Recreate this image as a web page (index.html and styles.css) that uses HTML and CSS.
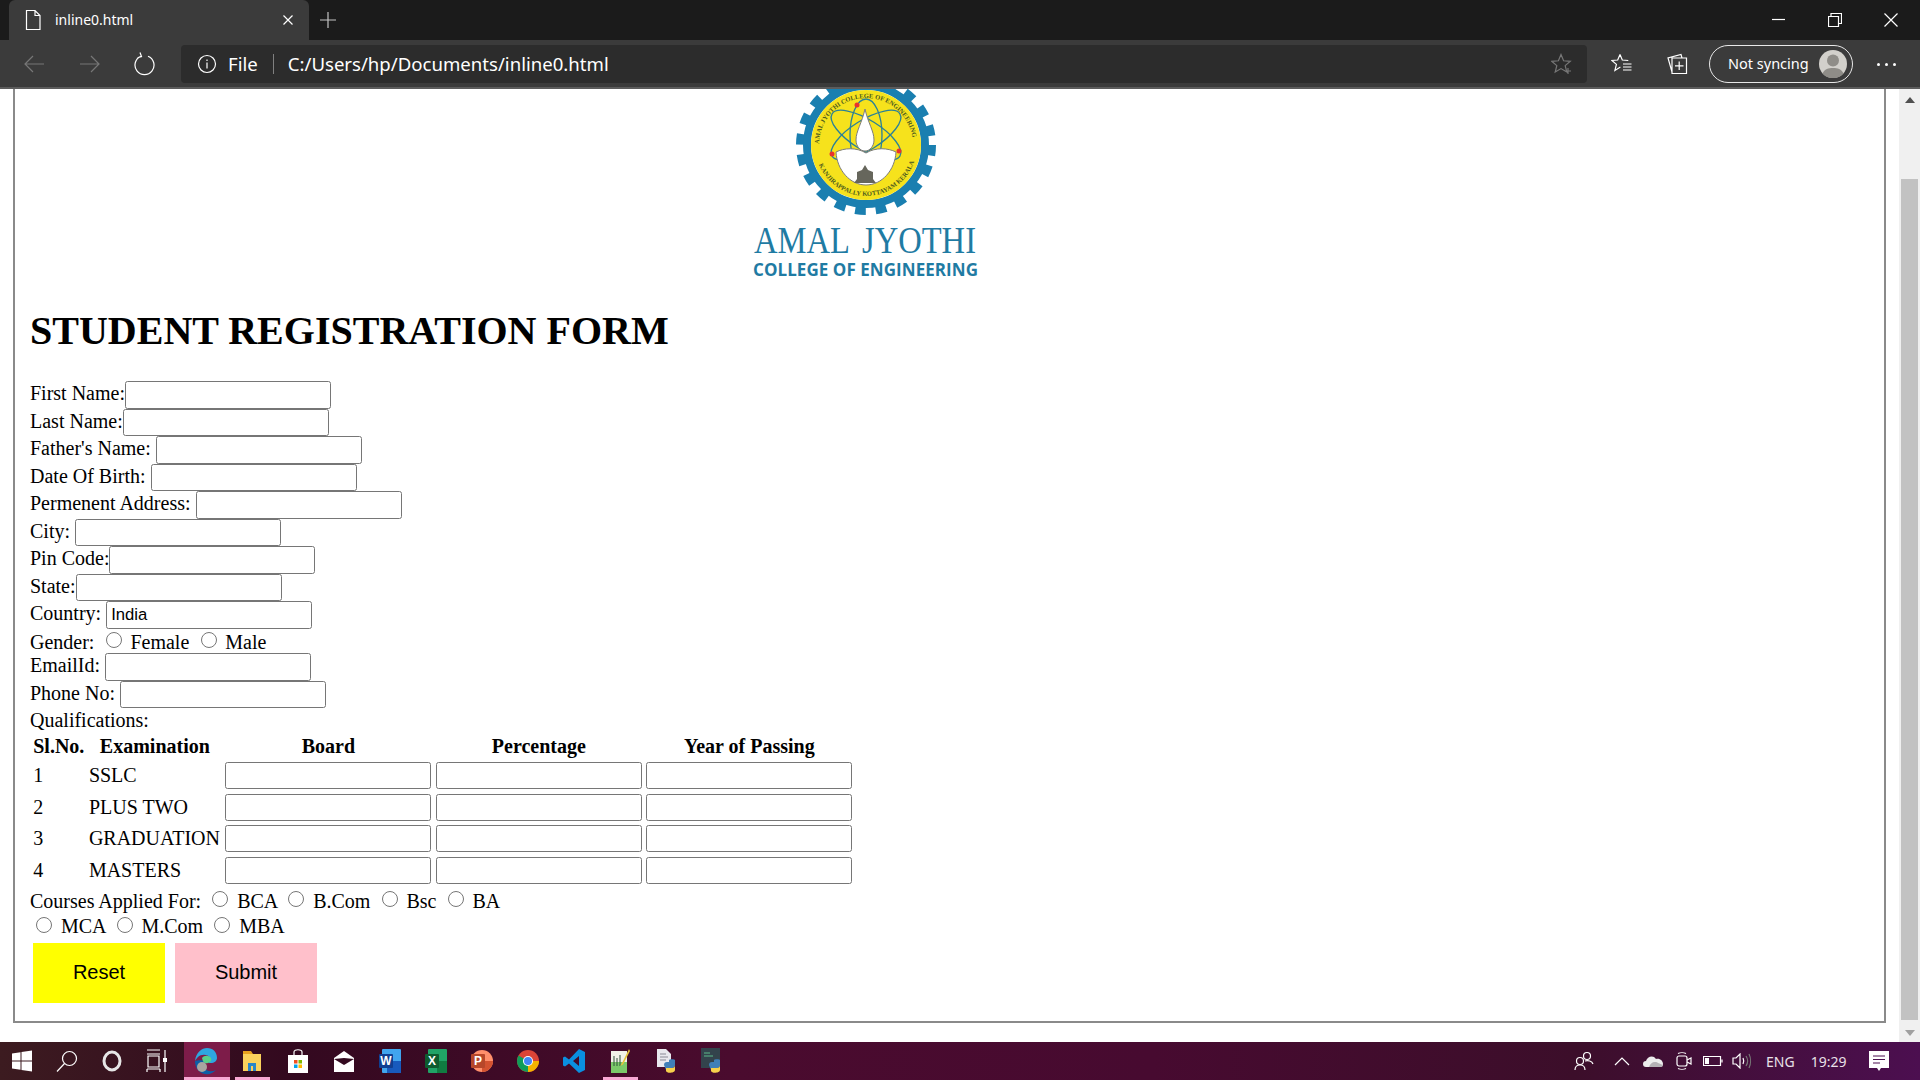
FILE: index.html
```html
<!DOCTYPE html>
<html lang="en">
<head>
<meta charset="UTF-8">
<title>inline0.html</title>
<link rel="stylesheet" href="styles.css">
</head>
<body>

<!-- browser tab strip -->
<div class="tabbar">
    <div class="tab">
        <svg class="tab-icon" width="18" height="22" viewBox="0 0 18 22"><path d="M2.5 1.5h8.5l5 5v14h-13.500z M11 1.500v5h5" class="line-white"/></svg>
        <span class="tab-title">inline0.html</span>
        <svg class="tab-close" width="12" height="12" viewBox="0 0 12 12"><path d="M1.500 1.500l9 9M10.500 1.500l-9 9" class="line-white"/></svg>
    </div>
    <svg class="tab-new" width="18" height="18" viewBox="0 0 18 18"><path d="M9 1v16M1 9h16" class="line-light"/></svg>
    <div class="window-controls">
        <svg width="14" height="14" viewBox="0 0 14 14"><path d="M0 6.500h13" class="line-white"/></svg>
        <svg width="14" height="14" viewBox="0 0 14 14"><path d="M.5 3.500h10v10h-10zM3 3.500v-3h10.500v10h-3" class="line-white"/></svg>
        <svg width="14" height="14" viewBox="0 0 14 14"><path d="M.5.500l13 13M13.500.500l-13 13" class="line-white"/></svg>
    </div>
</div>

<!-- address bar -->
<div class="toolbar">
    <div class="nav-buttons">
        <svg width="22" height="20" viewBox="0 0 22 20"><path d="M21 10H2M10 2l-8 8 8 8" class="line-dim"/></svg>
        <svg width="22" height="20" viewBox="0 0 22 20"><path d="M1 10h19M12 2l8 8-8 8" class="line-dim"/></svg>
        <svg class="nav-reload" width="22" height="24" viewBox="0 0 22 24"><path d="M7 4.200a9.500 9.500 0 1 0 7 0M6 .5l1.500 4-4 1.200" class="line-white"/></svg>
    </div>
    <div class="address">
        <svg width="20" height="20" viewBox="0 0 20 20"><circle cx="10" cy="10" r="8.500" class="line-white"/><path d="M10 8.500v6M10 5.500v1.500" class="line-white"/></svg>
        <span class="address-file">File</span>
        <span class="address-sep"></span>
        <span class="address-url">C:/Users/hp/Documents/inline0.html</span>
        <svg class="address-star" width="22" height="22" viewBox="0 0 22 22"><path d="M10 1.500l2.600 6.300 6.700.5-5.100 4.300 1.600 6.500-5.800-3.500-5.800 3.500 1.600-6.500-5.100-4.300 6.700-.5zM14 18h6M17 15v6" class="line-dim"/></svg>
    </div>
    <svg class="tool-icon" width="22" height="22" viewBox="0 0 22 22"><path d="M9 1.500l2.300 5.500 6 .5M9 1.500l-2.300 5.500-5.800.5 4.500 3.900-1.500 6 5.500-3.300M12 11h8.500M12 14h8.500M12 17h8.500" class="line-white"/></svg>
    <svg class="tool-icon" width="22" height="22" viewBox="0 0 22 22"><path d="M6 19L2 5l13-3.500 1 3.500M6 5h14.500v15.500H6zM13.200 8.500v8.500M9 12.800h8.500" class="line-white"/></svg>
    <div class="sync-pill">
        <span class="sync-label">Not syncing</span>
        <svg class="avatar" width="28" height="28" viewBox="0 0 28 28"><circle cx="14" cy="14" r="14" class="avatar-bg"/><circle cx="14" cy="10.500" r="6" class="avatar-fg"/><path d="M3.500 23.500c2-4.500 6-5.500 10.500-5.500s8.500 1 10.500 5.500a14 14 0 0 1-21 0z" class="avatar-fg"/></svg>
    </div>
    <div class="more-dots"><i></i><i></i><i></i></div>
</div>

<div class="content">
    <div class="page">
        <div class="form-box">
            <svg class="logo" width="240" height="192" viewBox="0 0 240 192">
                <defs>
                    <path id="sealTop" d="M73 56a47 47 0 0 1 94 0"/>
                    <path id="sealBottom" d="M70 66a51 51 0 0 0 100 0"/>
                </defs>
                <circle cx="120" cy="56" r="64.500" class="gear-teeth"/>
                <circle cx="120" cy="56" r="59" class="gear-ring"/>
                <circle cx="120" cy="56" r="55" class="seal"/>
                <text class="seal-text"><textPath href="#sealTop" startOffset="1">AMAL JYOTHI COLLEGE OF ENGINEERING</textPath></text>
                <text class="seal-text"><textPath href="#sealBottom" startOffset="10">KANJIRAPPALLY KOTTAYAM KERALA</textPath></text>
                <ellipse cx="120" cy="46" rx="16" ry="36" class="orbit"/>
                <ellipse cx="120" cy="46" rx="40" ry="15" transform="rotate(32 120 46)" class="orbit"/>
                <ellipse cx="120" cy="46" rx="40" ry="15" transform="rotate(-32 120 46)" class="orbit"/>
                <path d="M90 63c8-4 20-5 30 1 10-6 22-5 30-1-1 18-14 33-30 33s-29-15-30-33z" class="lamp"/>
                <path d="M119 20c3 14 9 22 9 31 0 6-4 11-9 11s-9-5-9-11c0-9 6-17 9-31z" class="lamp"/>
                <path d="M119 76l3 5 5 2v7l3 4h-22l3-4v-7l5-2z" class="emblem"/>
                <circle cx="111" cy="16" r="2.500" class="dot"/>
                <circle cx="86" cy="65" r="2.500" class="dot"/>
                <circle cx="153" cy="62" r="2.500" class="dot"/>
                <text x="8" y="164" textLength="222" lengthAdjust="spacingAndGlyphs" class="logo-name">AMAL JYOTHI</text>
                <text x="7" y="187" textLength="225" class="logo-sub">COLLEGE OF ENGINEERING</text>
            </svg>

            <h1>STUDENT REGISTRATION FORM</h1>

            <form>
                <div class="row">First Name:<input type="text"></div>
                <div class="row">Last Name:<input type="text"></div>
                <div class="row">Father's Name: <input type="text"></div>
                <div class="row">Date Of Birth: <input type="text"></div>
                <div class="row">Permenent Address: <input type="text"></div>
                <div class="row">City: <input type="text"></div>
                <div class="row">Pin Code:<input type="text"></div>
                <div class="row">State:<input type="text"></div>
                <div class="row">Country: <input type="text" value="India"></div>
                <div class="row-gender">Gender: <input type="radio" name="gender"> Female <input type="radio" name="gender"> Male</div>
                <div class="row">EmailId: <input type="text"></div>
                <div class="row">Phone No: <input type="text"></div>
                <div class="row-label">Qualifications:</div>

                <table>
                    <thead>
                        <tr>
                            <th>Sl.No.</th>
                            <th class="exam-col">Examination</th>
                            <th>Board</th>
                            <th>Percentage</th>
                            <th>Year of Passing</th>
                        </tr>
                    </thead>
                    <tbody>
                        <tr>
                            <td>1</td><td>SSLC</td>
                            <td><input type="text"></td><td><input type="text"></td><td><input type="text"></td>
                        </tr>
                        <tr>
                            <td>2</td><td>PLUS TWO</td>
                            <td><input type="text"></td><td><input type="text"></td><td><input type="text"></td>
                        </tr>
                        <tr>
                            <td>3</td><td>GRADUATION</td>
                            <td><input type="text"></td><td><input type="text"></td><td><input type="text"></td>
                        </tr>
                        <tr>
                            <td>4</td><td>MASTERS</td>
                            <td><input type="text"></td><td><input type="text"></td><td><input type="text"></td>
                        </tr>
                    </tbody>
                </table>

                <div class="courses">
                    Courses Applied For: <input type="radio" name="course"> BCA <input type="radio" name="course"> B.Com <input type="radio" name="course"> Bsc <input type="radio" name="course"> BA<br>
                    <input type="radio" name="course"> MCA <input type="radio" name="course"> M.Com <input type="radio" name="course"> MBA
                </div>

                <div class="form-buttons">
                    <button type="reset" class="btn-reset">Reset</button>
                    <button type="button" class="btn-submit">Submit</button>
                </div>
            </form>
        </div>
    </div>
    <div class="scrollbar">
        <span class="arrow-up"></span>
        <div class="scroll-track"><div class="scroll-thumb"></div></div>
        <span class="arrow-down"></span>
    </div>
</div>

<!-- windows taskbar -->
<div class="taskbar">
    <div class="task-item task-system">
        <svg width="22" height="22" viewBox="0 0 22 22"><path d="M1 3.500l8.500-1.200v8.200H1zM10.500 2.100L21 .5v10h-10.500zM1 11.500h8.500v8.200L1 18.500zM10.500 11.500H21v10l-10.500-1.500z" class="fill-white"/></svg>
    </div>
    <div class="task-item task-system">
        <svg width="22" height="22" viewBox="0 0 22 22"><circle cx="13.500" cy="8.500" r="7" class="line-white"/><path d="M8.500 13.500L1 21.500" class="line-white"/></svg>
    </div>
    <div class="task-item task-system">
        <svg width="20" height="22" viewBox="0 0 20 22"><ellipse cx="10" cy="11" rx="8" ry="9" class="cortana"/></svg>
    </div>
    <div class="task-item task-system">
        <svg width="22" height="24" viewBox="0 0 22 24"><path d="M1 1h13M1 5h13M2 7h11v11H2zM1 20h13M1 23h0M1 20v3M14 20v3M19 1v22" class="line-white"/><rect x="17" y="9" width="4" height="4" class="fill-white"/></svg>
    </div>
    <div class="task-item task-active running-wide">
        <svg width="24" height="28" viewBox="0 0 24 28">
            <path d="M1 14C2 5 8 1 13 1c6 0 10 4 10 10 0 3-3 5-6 5h-3c2-1 3-3 2-5-2-4-9-4-12-1-1 1-2 2-3 4z" class="edge-blue"/>
            <path d="M1 14c0 7 4 12 10 13 4 1 8-1 11-4-4 2-9 2-11-2-1-3 0-6 3-7-5-1-11-1-13 0z" class="edge-dark"/>
            <path d="M8 11c2-3 7-3 9 0 1 2 0 4-3 5-3 1-5 0-6-5z" class="edge-green"/>
            <circle cx="8" cy="20" r="5" class="edge-avatar"/>
        </svg>
    </div>
    <div class="task-item running">
        <svg width="20" height="22" viewBox="0 0 20 22"><path d="M1 1h8l2 3H1z" class="folder-dark"/><path d="M1 4h18v17H1z" class="folder"/><path d="M6 21v-8h8v8h-3v-5H9v5z" class="folder-blue"/></svg>
    </div>
    <div class="task-item">
        <svg width="20" height="24" viewBox="0 0 20 24"><path d="M6 6V3c0-3 8-3 8 0v3" class="line-white"/><rect y="6" width="20" height="18" class="fill-white"/><rect x="6" y="11" width="3.500" height="3.500" class="ms-red"/><rect x="10.500" y="11" width="3.500" height="3.500" class="ms-green"/><rect x="6" y="15.500" width="3.500" height="3.500" class="ms-blue"/><rect x="10.500" y="15.500" width="3.500" height="3.500" class="ms-yellow"/></svg>
    </div>
    <div class="task-item">
        <svg width="20" height="22" viewBox="0 0 20 22"><path d="M0 8l10-7 10 7v14H0z" class="fill-white"/><path d="M0 9l10 6 10-6-10-1z" class="mail-fold"/></svg>
    </div>
    <div class="task-item">
        <svg width="22" height="24" viewBox="0 0 22 24"><rect x="3" width="19" height="24" rx="1" class="word-light"/><rect x="8" y="12" width="14" height="12" class="word-dark"/><rect y="5" width="14" height="14" rx="1" class="word-badge"/><text x="7" y="16" class="badge-text">W</text></svg>
    </div>
    <div class="task-item">
        <svg width="22" height="24" viewBox="0 0 22 24"><rect x="3" width="19" height="24" rx="1" class="excel-light"/><rect x="12" y="12" width="10" height="12" class="excel-dark"/><rect y="5" width="14" height="14" rx="1" class="excel-badge"/><text x="7" y="16" class="badge-text">X</text></svg>
    </div>
    <div class="task-item">
        <svg width="22" height="24" viewBox="0 0 22 24"><circle cx="11" cy="12" r="11" class="ppt-light"/><path d="M11 12h11a11 11 0 0 1-11 11z" class="ppt-dark"/><rect y="5" width="14" height="14" rx="1" class="ppt-badge"/><text x="7" y="16" class="badge-text">P</text></svg>
    </div>
    <div class="task-item">
        <svg width="22" height="22" viewBox="0 0 22 22"><circle cx="11" cy="11" r="11" class="chrome-red"/><path d="M11 11L1.500 5.500A11 11 0 0 0 11 22z" class="chrome-green"/><path d="M11 11h11a11 11 0 0 1-11 11z" class="chrome-yellow"/><circle cx="11" cy="11" r="5" class="fill-white"/><circle cx="11" cy="11" r="4" class="chrome-blue"/></svg>
    </div>
    <div class="task-item">
        <svg width="22" height="24" viewBox="0 0 22 24"><path d="M16 0l6 3v18l-6 3-10-9.500-4 3-2-1V8.500l2-1 4 3zM16 7l-6 5 6 5z" class="vscode"/></svg>
    </div>
    <div class="task-item running">
        <svg width="20" height="26" viewBox="0 0 20 26"><path d="M1 3h16v22H1z" class="note-page"/><path d="M1 14h16v11H1z" class="note-green"/><path d="M4 8v10M7 10v8M10 7v11" class="note-lines"/><path d="M19 1L12 15l-2 3 3-1.500L20 3z" class="note-pen"/></svg>
    </div>
    <div class="task-item">
        <svg width="20" height="26" viewBox="0 0 20 26"><path d="M1 1h9l5 5v13H1z" class="py-page"/><path d="M4 6h6M4 9h8M4 12h6" class="py-lines"/><path d="M8 17c0-2 1-3 3-3h2v-2c0-1 6-1 6 0v5c0 2-1 3-3 3h-3c-2 0-3 1-3 2z" class="py-blue"/><path d="M10 20h6c2 0 3-1 3-3v5c0 3-8 4-9 1z" class="py-yellow"/></svg>
    </div>
    <div class="task-item">
        <svg width="22" height="26" viewBox="0 0 22 26"><rect width="19" height="20" class="idle-box"/><path d="M3 5h6M3 8h9" class="idle-lines"/><path d="M8 17c0-2 1-3 3-3h2v-2c0-1 6-1 6 0v5c0 2-1 3-3 3h-3c-2 0-3 1-3 2z" class="py-blue"/><path d="M10 20h6c2 0 3-1 3-3v5c0 3-8 4-9 1z" class="py-yellow"/></svg>
    </div>

    <div class="tray">
        <svg class="tray-people" width="20" height="20" viewBox="0 0 20 20"><circle cx="13" cy="5" r="3.500" class="line-white"/><circle cx="6" cy="10" r="3.500" class="line-white"/><path d="M1 19c0-3 2-5 5-5s5 2 5 5M11 10c3-1 7 0 8 3" class="line-white"/></svg>
        <svg class="tray-caret" width="16" height="10" viewBox="0 0 16 10"><path d="M1 9l7-7 7 7" class="line-white"/></svg>
        <svg class="tray-cloud" width="20" height="12" viewBox="0 0 20 12"><path d="M3 12a3 3 0 0 1 0-6c1-4 7-7 10-2 4-1 7 2 7 5 0 2-1 3-3 3z" class="cloud"/><path d="M6 12c1-3 3-5 6-5s4 2 8 3c0 1-1 2-3 2z" class="cloud-shade"/></svg>
        <svg class="tray-meet" width="16" height="18" viewBox="0 0 16 18"><rect x="1" y="4" width="10" height="10" rx="2" class="line-white"/><path d="M11 8l4-2v6l-4-2M2 1.500c2-1 6-1 8 0M2 16.500c2 1 6 1 8 0" class="line-white"/></svg>
        <svg class="tray-battery" width="20" height="12" viewBox="0 0 20 12"><path d="M.5 1.500h17v9H.5zM19 4.500v3" class="line-white"/><rect x="2" y="3" width="4" height="6" class="fill-white"/></svg>
        <svg class="tray-volume" width="20" height="16" viewBox="0 0 20 16"><path d="M1 5h3l4-4v14l-4-4H1z" class="line-white"/><path d="M11 5c1 2 1 4 0 6" class="line-white"/><path d="M14 3c2 3 2 7 0 10M17 1c2 4 2 10 0 14" class="line-dim"/></svg>
        <span class="tray-lang">ENG</span>
        <span class="tray-time">19:29</span>
        <svg class="tray-note" width="20" height="21" viewBox="0 0 20 21"><path d="M0 0h20v17h-8l-2 3-2-3H0z" class="fill-white"/><path d="M4 5h12M4 8.500h12M4 12h7" class="note-ink"/></svg>
    </div>
</div>

</body>
</html>
```

FILE: styles.css
```css
* {
    box-sizing: border-box;
}

html, body {
    margin: 0;
    height: 100%;
}

body {
    display: flex;
    flex-direction: column;
    height: 1080px;
    overflow: hidden;
    background-color: white;
    font-family: "Liberation Serif", serif;
}

/* icon strokes and fills */
.line-white, .line-light, .line-dim {
    fill: none;
    stroke-width: 1.2;
}

.line-white {
    stroke: #ffffff;
}

.line-light {
    stroke: #c4c4c4;
}

.line-dim {
    stroke: #777777;
}

.fill-white {
    fill: #ffffff;
}

/* tab strip */
.tabbar {
    display: flex;
    align-items: center;
    height: 40px;
    padding-left: 9px;
    background-color: #1b1b1b;
}

.tab {
    display: flex;
    align-items: center;
    width: 300px;
    height: 40px;
    padding: 0 15px;
    border-radius: 6px 6px 0 0;
    background-color: #3b3b3b;
}

.tab-title {
    flex: 1;
    margin: -2px 0 0 13px;
    color: white;
    font-family: "Noto Sans", sans-serif;
    font-size: 14px;
}

.tab-new {
    margin-left: 10px;
}

.window-controls {
    display: flex;
    gap: 42px;
    margin-left: auto;
    padding-right: 22px;
}

/* address bar */
.toolbar {
    display: flex;
    align-items: center;
    height: 49px;
    padding: 5px 0 4px;
    background-color: #3b3b3b;
    border-bottom: 2px solid #5c5c5c;
}

.nav-buttons {
    display: flex;
    align-items: center;
    gap: 34px;
    width: 181px;
    padding-left: 23px;
}

.nav-reload {
    margin-left: -1px;
}

.address {
    display: flex;
    align-items: center;
    width: 1406px;
    height: 38px;
    padding: 0 14px 0 16px;
    border-radius: 4px;
    background-color: #2c2c2c;
    color: white;
    font-family: "Noto Sans", sans-serif;
    font-size: 18.600px;
}

.address-file {
    margin: -2px 0 0 11px;
}

.address-url {
    margin-top: -2px;
}

.address-sep {
    width: 1px;
    height: 20px;
    margin: 0 14px 0 15px;
    background-color: #808080;
}

.address-star {
    margin-left: auto;
}

.tool-icon {
    margin-left: 24px;
}

.tool-icon + .tool-icon {
    margin-left: 33px;
}

.sync-pill {
    display: flex;
    align-items: center;
    justify-content: space-between;
    width: 144px;
    height: 38px;
    margin-left: 21px;
    padding: 0 5px 0 18px;
    border: 1.500px solid #e8e8e8;
    border-radius: 19px;
    color: white;
    font-family: "Noto Sans", sans-serif;
    font-size: 14.500px;
}

.sync-label {
    margin-top: -2px;
}

.avatar-bg {
    fill: #d2d0cb;
}

.avatar-fg {
    fill: #8f8d88;
}

.more-dots {
    display: flex;
    gap: 5px;
    margin-left: 24px;
}

.more-dots i {
    width: 3px;
    height: 3px;
    border-radius: 50%;
    background-color: white;
}

/* page area */
.content {
    display: flex;
    flex: 1;
    min-height: 0;
}

.page {
    flex: 1;
    padding: 0 13px 0 13px;
    overflow: hidden;
}

.form-box {
    height: 934px;
    padding-left: 15px;
    border: 2px solid #8a8a8a;
    border-top: none;
    color: black;
    font-size: 20px;
}

.logo {
    display: block;
    margin-left: 716px;
}

.gear-teeth {
    fill: none;
    stroke: #1a7fb0;
    stroke-width: 11;
    stroke-dasharray: 10.500 9.770;
}

.gear-ring {
    fill: none;
    stroke: #1a7fb0;
    stroke-width: 8;
}

.seal {
    fill: #f6e21c;
}

.seal-text {
    fill: #4d5a1e;
    font-size: 6.500px;
    font-weight: bold;
}

.orbit {
    fill: none;
    stroke: #2a8198;
    stroke-width: 1.300;
}

.lamp {
    fill: #ffffff;
    stroke: #7d7d7d;
    stroke-width: 1;
}

.emblem {
    fill: #66665c;
}

.dot {
    fill: #e8322f;
}

.logo-name {
    fill: #1f7ba3;
    font-size: 38px;
    word-spacing: 6px;
}

.logo-sub {
    fill: #1f7ba3;
    font-family: "Open Sans", sans-serif;
    font-size: 17px;
    font-weight: bold;
}

h1 {
    margin: 27px 0 27px;
    font-size: 40px;
    line-height: 46px;
}

.row {
    height: 27.500px;
    white-space: nowrap;
}

.row-gender {
    height: 24.500px;
    line-height: 24px;
    white-space: nowrap;
}

.row-label {
    height: 23.500px;
    line-height: 24px;
    white-space: nowrap;
}

input[type="text"] {
    width: 206px;
    height: 27.500px;
    margin: 0;
    padding: 1px 4px;
    border: 1px solid #767676;
    border-radius: 2.500px;
    font-family: "Liberation Sans", sans-serif;
    font-size: 16.670px;
}

input[type="radio"] {
    width: 16px;
    height: 16px;
    margin: 3.750px 3.750px 0 6.250px;
}

table {
    border-spacing: 2.500px;
    font-size: 20px;
}

th, td {
    padding: 1.250px;
    text-align: left;
    white-space: nowrap;
}

th {
    text-align: center;
}

.exam-col {
    width: 134.500px;
}

td input[type="text"] {
    display: block;
    height: 27px;
}

.courses {
    padding-top: 0.500px;
    line-height: 25px;
}

.form-buttons {
    display: flex;
    gap: 10px;
    margin: 3.500px 0 0 3px;
}

.form-buttons button {
    height: 60px;
    border: none;
    color: black;
    font-family: "Liberation Sans", sans-serif;
    font-size: 20px;
}

.btn-reset {
    width: 132px;
    background-color: yellow;
}

.btn-submit {
    width: 142px;
    background-color: pink;
}

/* scrollbar */
.scrollbar {
    display: flex;
    flex-direction: column;
    align-items: center;
    width: 21px;
    background-color: #f0f0f0;
}

.arrow-up, .arrow-down {
    flex: none;
    width: 0;
    height: 0;
    border-left: 5px solid transparent;
    border-right: 5px solid transparent;
}

.arrow-up {
    margin-top: 8px;
    border-bottom: 6px solid #505050;
}

.arrow-down {
    margin-bottom: 6px;
    border-top: 6px solid #a0a0a0;
}

.scroll-track {
    flex: 1;
    width: 17px;
    padding: 76px 0 10px;
}

.scroll-thumb {
    height: 100%;
    background-color: #c2c2c2;
}

/* taskbar */
.taskbar {
    display: flex;
    align-items: center;
    flex: none;
    height: 38px;
    background: linear-gradient(90deg, #3c1b20 0%, #33091f 15%, #4a0b2e 38%, #470a30 60%, #3c0e2a 82%, #4c0f50 100%);
}

.task-item {
    display: flex;
    align-items: center;
    justify-content: center;
    position: relative;
    width: 46px;
    height: 38px;
}

.task-item svg {
    margin-right: 2px;
}

.task-system {
    width: 45px;
}

.task-active {
    margin-left: 3.500px;
    background-color: #7d1c49;
}

.running::after, .running-wide::after {
    content: "";
    position: absolute;
    bottom: 0;
    height: 3px;
    background-color: #f8a9d4;
}

.running::after {
    left: 5px;
    right: 6px;
}

.running-wide::after {
    left: 0;
    right: 0;
}

.cortana {
    fill: none;
    stroke: #e6e6e6;
    stroke-width: 3;
}

.edge-blue { fill: #2ea7e0; }
.edge-dark { fill: #0c5ea8; }
.edge-green { fill: #58d18a; }
.edge-avatar { fill: #a9a5a0; }

.folder { fill: #fbd25c; }
.folder-dark { fill: #e9a21f; }
.folder-blue { fill: #2a86c8; }

.ms-red { fill: #f25022; }
.ms-green { fill: #7fba00; }
.ms-blue { fill: #00a4ef; }
.ms-yellow { fill: #ffb900; }

.mail-fold { fill: #33091f; }

.word-light { fill: #41a5ee; }
.word-dark { fill: #185abd; }
.word-badge { fill: #103f91; }
.excel-light { fill: #21a366; }
.excel-dark { fill: #107c41; }
.excel-badge { fill: #0e5c2f; }
.ppt-light { fill: #ff8f6b; }
.ppt-dark { fill: #d35230; }
.ppt-badge { fill: #b7472a; }

.badge-text {
    fill: white;
    font-family: "Liberation Sans", sans-serif;
    font-size: 12px;
    font-weight: bold;
    text-anchor: middle;
}

.chrome-red { fill: #db4437; }
.chrome-green { fill: #0f9d58; }
.chrome-yellow { fill: #f4b400; }
.chrome-blue { fill: #4285f4; }

.vscode { fill: #0a8fe0; fill-rule: evenodd; }

.note-page { fill: #f2f2e8; }
.note-green { fill: #7bc96a; }
.note-lines { stroke: #30503a; stroke-width: 1; fill: none; }
.note-pen { fill: #e6c23c; }

.py-page { fill: #e8e8ee; }
.py-lines { stroke: #8a8a96; stroke-width: 1; fill: none; }
.py-blue { fill: #3f7fb8; }
.py-yellow { fill: #f7d04c; }
.idle-box { fill: #33434c; }
.idle-lines { stroke: #5dbb8a; stroke-width: 1; fill: none; }

/* system tray */
.tray {
    display: flex;
    align-items: center;
    margin-left: auto;
    color: #e8e0e8;
    font-family: "Noto Sans", sans-serif;
    font-size: 14px;
}

.tray-caret { margin-left: 20px; }
.tray-cloud { margin-left: 13px; }
.tray-meet { margin-left: 13px; }
.tray-battery { margin-left: 11px; }
.tray-volume { margin-left: 8.500px; }
.tray-lang { margin-left: 14.500px; }
.tray-time { margin-left: 16px; }
.tray-note { margin: 0 31px 0 22.500px; }
.note-ink { stroke: #4c0f50; stroke-width: 1; fill: none; }
.cloud { fill: #ececec; }
.cloud-shade { fill: #b4b0b4; }
```
